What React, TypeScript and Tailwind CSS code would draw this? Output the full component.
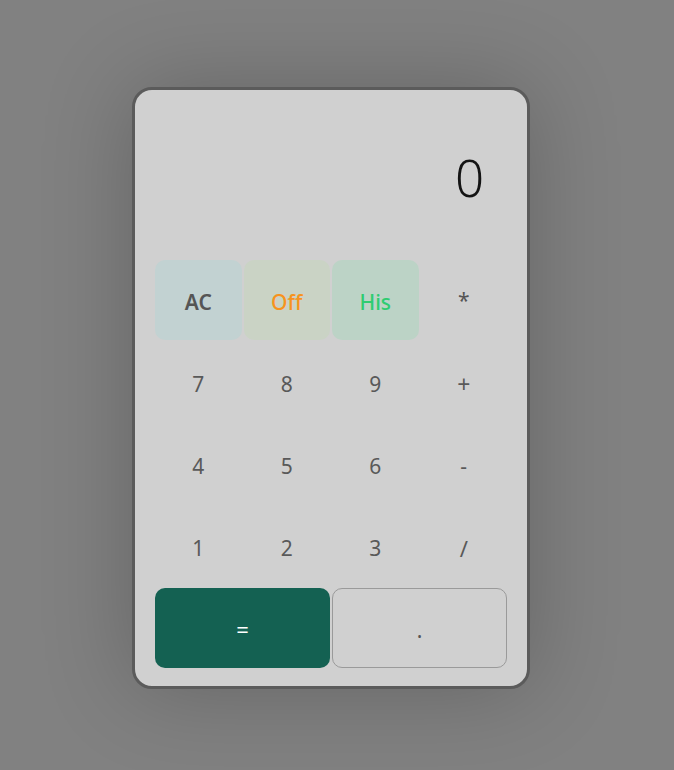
import React from 'react';

const keys = [
  { label: 'AC', className: 'bg-[#c2d2d2] text-[#555555] font-semibold text-[20px]' },
  { label: 'Off', className: 'bg-[#cad3c5] text-[#f7931e] font-medium text-[20px]' },
  { label: 'His', className: 'bg-[#bcd3c6] text-[#2ecc71] font-medium text-[20px]' },
  { label: '*', className: 'text-[#555555] text-[18px] pb-[4px]' },
  { label: '7', className: 'text-[#595959]' },
  { label: '8', className: 'text-[#595959]' },
  { label: '9', className: 'text-[#595959]' },
  { label: '+', className: 'text-[#595959] text-[23px]' },
  { label: '4', className: 'text-[#595959]' },
  { label: '5', className: 'text-[#595959]' },
  { label: '6', className: 'text-[#595959]' },
  { label: '-', className: 'text-[#595959]' },
  { label: '1', className: 'text-[#595959]' },
  { label: '2', className: 'text-[#595959]' },
  { label: '3', className: 'text-[#595959]' },
  { label: '/', className: 'text-[#595959] text-[22px]' },
];

export default function App() {
  return (
    <div
      className="min-h-[770px] bg-[#818181] pt-[87px] pl-[132px]"
      style={{ fontFamily: '"Noto Sans", "Open Sans", sans-serif' }}
    >
      <div className="w-[398px] h-[602px] border-[3px] border-[#5b5b5b] rounded-[20px] bg-[#d0d0d0] shadow-[0_0_90px_rgba(0,0,0,0.22)] flex flex-col">
        <div className="h-[170px] flex items-center justify-end pr-[43px] pt-[4px]">
          <span className="text-[51px] leading-none text-[#141414] font-light">0</span>
        </div>
        <div className="px-5 grid grid-cols-4 auto-rows-[80px] gap-[2px]">
          {keys.map((k) => (
            <button
              key={k.label}
              className={`rounded-[10px] flex items-center justify-center pt-[5px] text-[21px] ${k.className}`}
            >
              {k.label}
            </button>
          ))}
          <button className="col-span-2 rounded-[10px] bg-[#146152] text-white text-[22px] pt-[3px] flex items-center justify-center">
            =
          </button>
          <button className="col-span-2 rounded-[10px] border border-[#9a9a9a] text-[#555555] text-[21px] pt-[5px] flex items-center justify-center">
            .
          </button>
        </div>
      </div>
    </div>
  );
}
